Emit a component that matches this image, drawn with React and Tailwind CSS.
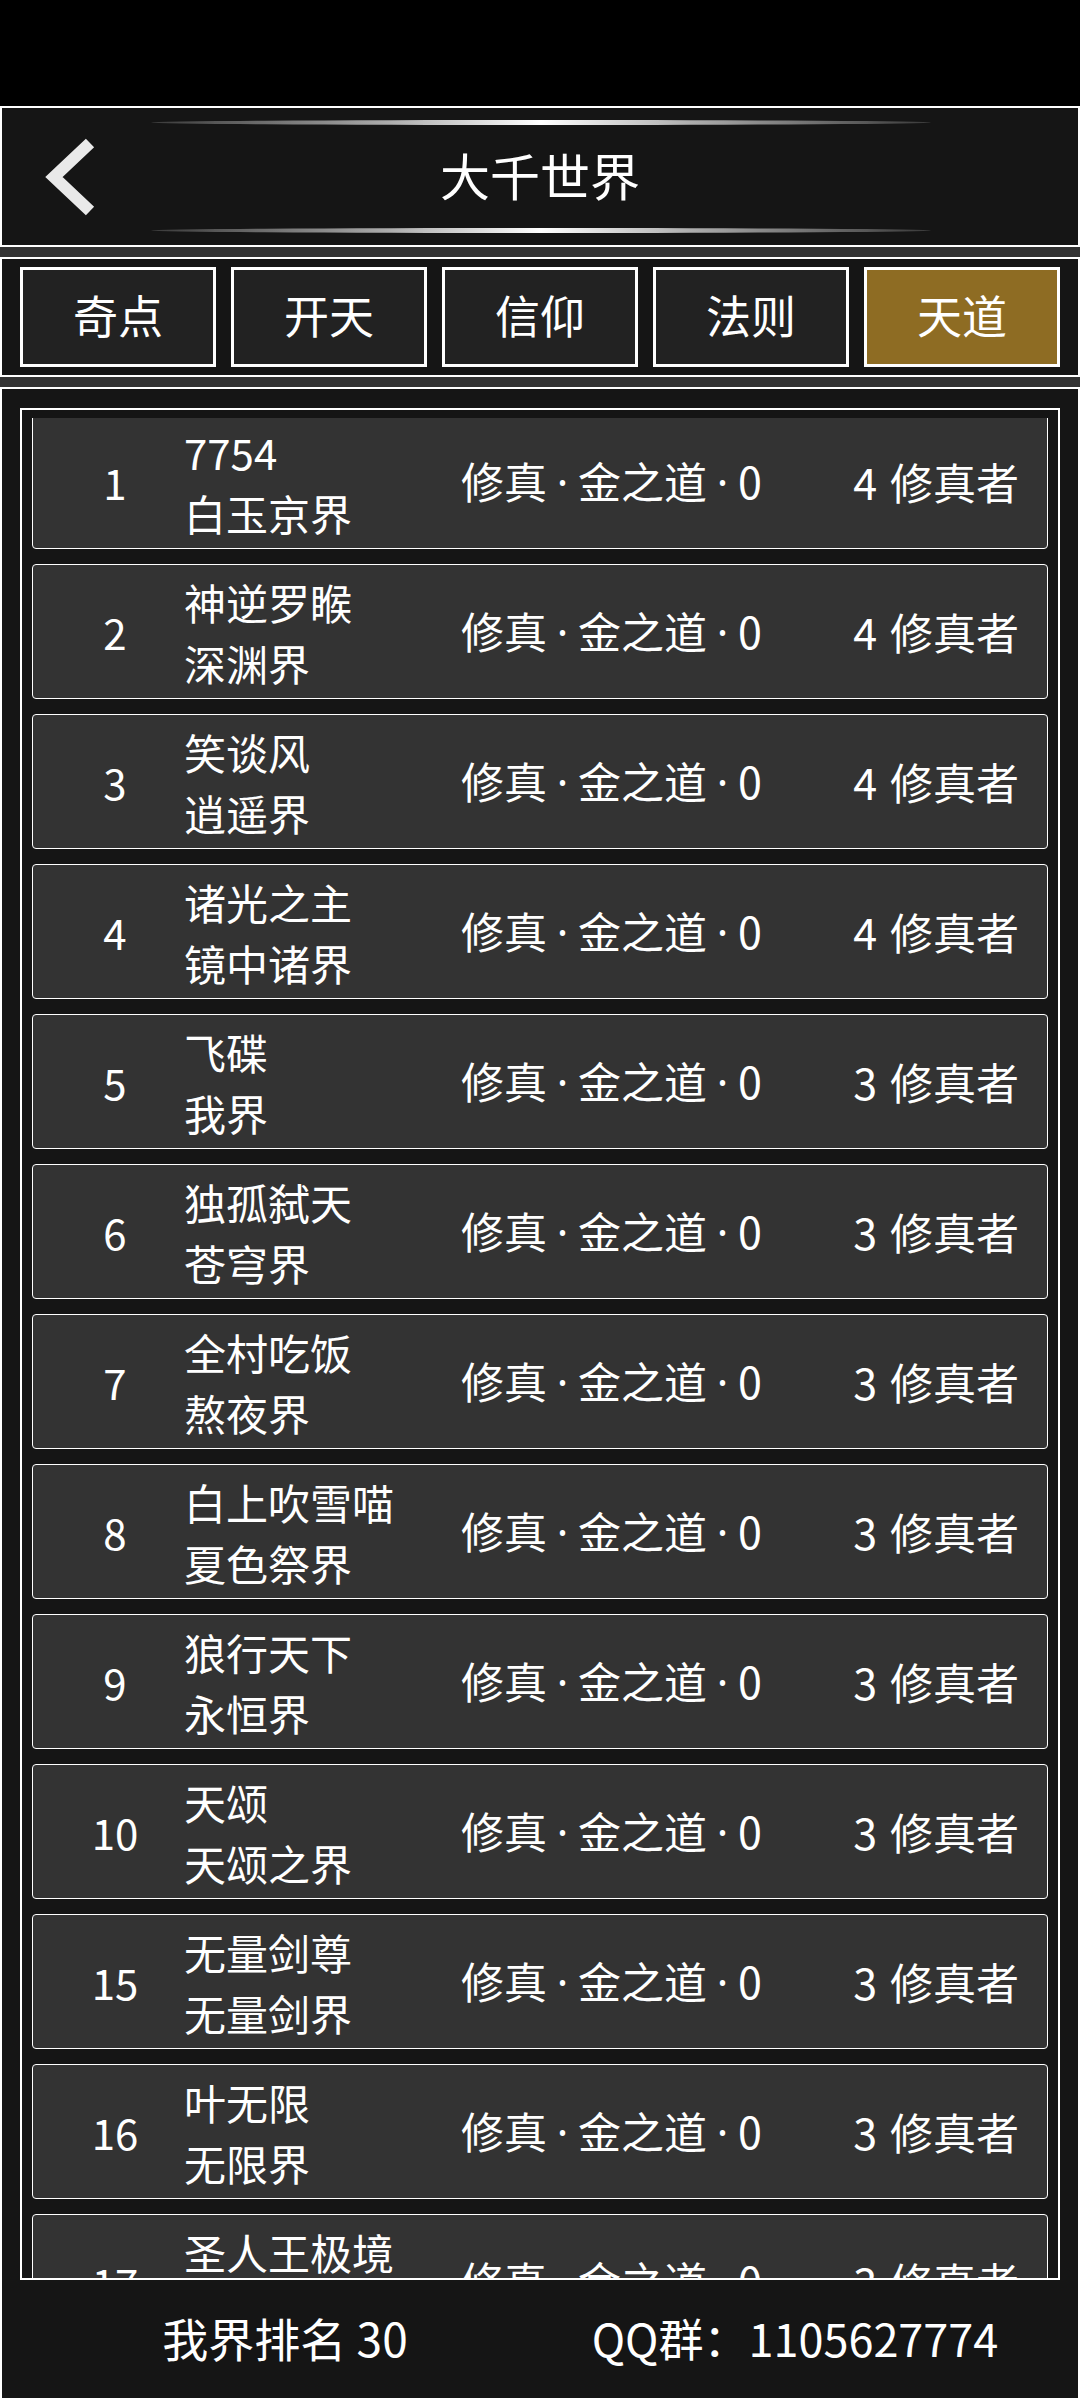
import React from 'react';

const FONT = { fontFamily: '"Noto Sans CJK SC", "Noto Sans", sans-serif' };

const tabs = ['奇点', '开天', '信仰', '法则', '天道'];

const realms = [
  { rank: 1, owner: '7754', realm: '白玉京界', count: 4 },
  { rank: 2, owner: '神逆罗睺', realm: '深渊界', count: 4 },
  { rank: 3, owner: '笑谈风', realm: '逍遥界', count: 4 },
  { rank: 4, owner: '诸光之主', realm: '镜中诸界', count: 4 },
  { rank: 5, owner: '飞碟', realm: '我界', count: 3 },
  { rank: 6, owner: '独孤弑天', realm: '苍穹界', count: 3 },
  { rank: 7, owner: '全村吃饭', realm: '熬夜界', count: 3 },
  { rank: 8, owner: '白上吹雪喵', realm: '夏色祭界', count: 3 },
  { rank: 9, owner: '狼行天下', realm: '永恒界', count: 3 },
  { rank: 10, owner: '天颂', realm: '天颂之界', count: 3 },
  { rank: 15, owner: '无量剑尊', realm: '无量剑界', count: 3 },
  { rank: 16, owner: '叶无限', realm: '无限界', count: 3 },
  { rank: 17, owner: '圣人王极境', realm: '圣人界', count: 3 },
];

function GlowLine({ className }) {
  return (
    <div
      className={`absolute left-[149px] w-[780px] h-[5px] rounded-[50%] bg-linear-to-r from-[#3a3a3a] via-white to-[#3a3a3a] ${className}`}
    />
  );
}

function BackChevron() {
  return (
    <svg className="absolute left-[38px] top-[22px]" width="60" height="100" viewBox="0 0 60 100">
      <polyline
        points="50,13 14,47 50,81"
        fill="none"
        stroke="#e9e9e9"
        strokeWidth="12"
        strokeLinejoin="miter"
        strokeLinecap="butt"
      />
    </svg>
  );
}

// narrow separator dot between the path parts
function Dot() {
  return (
    <span className="inline-block w-[31px] text-center" style={{ fontFamily: '"Noto Sans", sans-serif' }}>
      ·
    </span>
  );
}

function RealmRow({ item }) {
  return (
    <div className="h-[135px] shrink-0 flex items-center border border-white rounded-[4px] bg-[#333333] text-white">
      <div className="ml-[23px] w-[118px] text-center text-[42px] leading-none">{item.rank}</div>
      <div className="ml-[10px] w-[277px] flex flex-col text-[42px] leading-[61px]">
        <span>{item.owner}</span>
        <span>{item.realm}</span>
      </div>
      <div className="text-[43px] leading-none whitespace-nowrap">
        修真<Dot />金之道<Dot />0
      </div>
      <div className="flex-1 pr-[28px] flex justify-end items-center text-[43px] leading-none whitespace-nowrap">
        <span>{item.count}</span>
        <span className="ml-[13px]">修真者</span>
      </div>
    </div>
  );
}

export default function App() {
  return (
    <div className="w-[1080px] h-[2400px] bg-black flex flex-col text-white" style={FONT}>
      <div className="h-[106px] shrink-0 bg-black" />

      <header className="relative h-[141px] shrink-0 border-2 border-white bg-[#151515] flex items-center justify-center">
        <GlowLine className="top-[12px]" />
        <BackChevron />
        <h1 className="text-[50px] leading-none font-normal -mt-[6px]">大千世界</h1>
        <GlowLine className="top-[120px]" />
      </header>

      <div className="h-[10px] shrink-0 bg-[#333333]" />

      <nav className="h-[120px] shrink-0 border-2 border-white bg-[#151515] px-[18px] pt-[8px] flex gap-[15px]">
        {tabs.map((t, i) => (
          <div
            key={t}
            className={`w-[196px] h-[100px] border-[3px] border-white flex items-center justify-center text-[45px] leading-none pb-[6px] ${
              i === 4 ? 'bg-[#8e6c23]' : 'bg-[#222222]'
            }`}
          >
            {t}
          </div>
        ))}
      </nav>

      <div className="h-[10px] shrink-0 bg-[#333333]" />

      <section className="flex-1 border-2 border-white bg-[#151515] flex flex-col px-[18px] pt-[19px]">
        <div className="h-[1872px] shrink-0 border-2 border-white px-[10px] pt-[8px]">
          <div className="h-full overflow-hidden">
            <div className="-mt-[4px] flex flex-col gap-[15px]">
              {realms.map((r) => (
                <RealmRow key={r.rank} item={r} />
              ))}
            </div>
          </div>
        </div>
        <footer className="flex-1 grid grid-cols-2 items-center leading-none pb-[4px]">
          <div className="pl-[10px] text-center text-[46px]">我界排名 30</div>
          <div className="pr-[10px] text-center text-[45px]">QQ群：1105627774</div>
        </footer>
      </section>
    </div>
  );
}
